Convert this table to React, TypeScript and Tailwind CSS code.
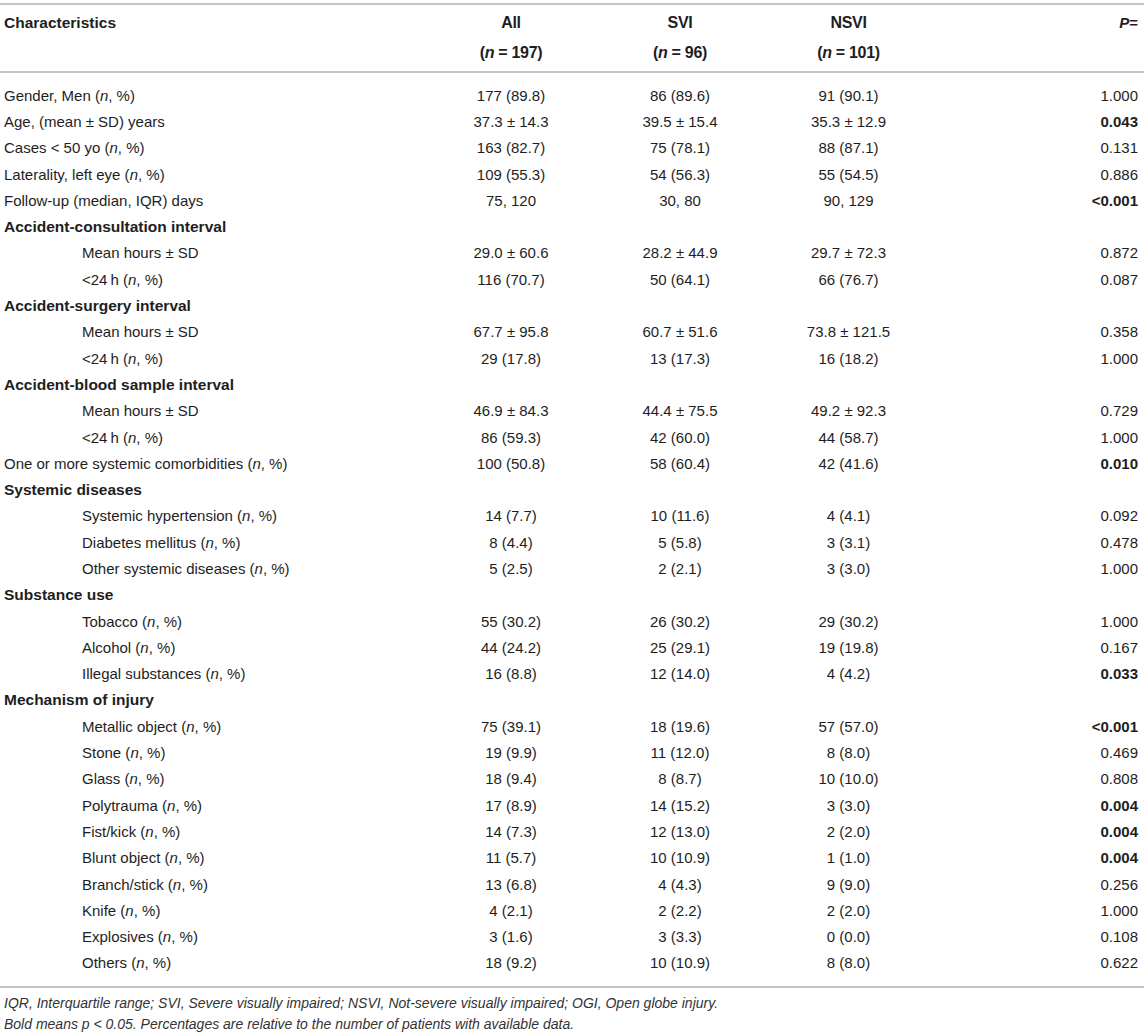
import React from 'react'

type Row = {
  label: React.ReactNode
  kind?: 'head' | 'sub'
  all?: string
  svi?: string
  nsvi?: string
  p?: string
  bold?: boolean
}

const N = () => <i>n</i>

const rows: Row[] = [
  { label: <>Gender, Men (<N />, %)</>, all: '177 (89.8)', svi: '86 (89.6)', nsvi: '91 (90.1)', p: '1.000' },
  { label: <>Age, (mean ± SD) years</>, all: '37.3 ± 14.3', svi: '39.5 ± 15.4', nsvi: '35.3 ± 12.9', p: '0.043', bold: true },
  { label: <>Cases &lt; 50 yo (<N />, %)</>, all: '163 (82.7)', svi: '75 (78.1)', nsvi: '88 (87.1)', p: '0.131' },
  { label: <>Laterality, left eye (<N />, %)</>, all: '109 (55.3)', svi: '54 (56.3)', nsvi: '55 (54.5)', p: '0.886' },
  { label: <>Follow-up (median, IQR) days</>, all: '75, 120', svi: '30, 80', nsvi: '90, 129', p: '<0.001', bold: true },
  { label: 'Accident-consultation interval', kind: 'head' },
  { label: <>Mean hours ± SD</>, kind: 'sub', all: '29.0 ± 60.6', svi: '28.2 ± 44.9', nsvi: '29.7 ± 72.3', p: '0.872' },
  { label: <>&lt;24{'\u2009'}h (<N />, %)</>, kind: 'sub', all: '116 (70.7)', svi: '50 (64.1)', nsvi: '66 (76.7)', p: '0.087' },
  { label: 'Accident-surgery interval', kind: 'head' },
  { label: <>Mean hours ± SD</>, kind: 'sub', all: '67.7 ± 95.8', svi: '60.7 ± 51.6', nsvi: '73.8 ± 121.5', p: '0.358' },
  { label: <>&lt;24{'\u2009'}h (<N />, %)</>, kind: 'sub', all: '29 (17.8)', svi: '13 (17.3)', nsvi: '16 (18.2)', p: '1.000' },
  { label: 'Accident-blood sample interval', kind: 'head' },
  { label: <>Mean hours ± SD</>, kind: 'sub', all: '46.9 ± 84.3', svi: '44.4 ± 75.5', nsvi: '49.2 ± 92.3', p: '0.729' },
  { label: <>&lt;24{'\u2009'}h (<N />, %)</>, kind: 'sub', all: '86 (59.3)', svi: '42 (60.0)', nsvi: '44 (58.7)', p: '1.000' },
  { label: <>One or more systemic comorbidities (<N />, %)</>, all: '100 (50.8)', svi: '58 (60.4)', nsvi: '42 (41.6)', p: '0.010', bold: true },
  { label: 'Systemic diseases', kind: 'head' },
  { label: <>Systemic hypertension (<N />, %)</>, kind: 'sub', all: '14 (7.7)', svi: '10 (11.6)', nsvi: '4 (4.1)', p: '0.092' },
  { label: <>Diabetes mellitus (<N />, %)</>, kind: 'sub', all: '8 (4.4)', svi: '5 (5.8)', nsvi: '3 (3.1)', p: '0.478' },
  { label: <>Other systemic diseases (<N />, %)</>, kind: 'sub', all: '5 (2.5)', svi: '2 (2.1)', nsvi: '3 (3.0)', p: '1.000' },
  { label: 'Substance use', kind: 'head' },
  { label: <>Tobacco (<N />, %)</>, kind: 'sub', all: '55 (30.2)', svi: '26 (30.2)', nsvi: '29 (30.2)', p: '1.000' },
  { label: <>Alcohol (<N />, %)</>, kind: 'sub', all: '44 (24.2)', svi: '25 (29.1)', nsvi: '19 (19.8)', p: '0.167' },
  { label: <>Illegal substances (<N />, %)</>, kind: 'sub', all: '16 (8.8)', svi: '12 (14.0)', nsvi: '4 (4.2)', p: '0.033', bold: true },
  { label: 'Mechanism of injury', kind: 'head' },
  { label: <>Metallic object (<N />, %)</>, kind: 'sub', all: '75 (39.1)', svi: '18 (19.6)', nsvi: '57 (57.0)', p: '<0.001', bold: true },
  { label: <>Stone (<N />, %)</>, kind: 'sub', all: '19 (9.9)', svi: '11 (12.0)', nsvi: '8 (8.0)', p: '0.469' },
  { label: <>Glass (<N />, %)</>, kind: 'sub', all: '18 (9.4)', svi: '8 (8.7)', nsvi: '10 (10.0)', p: '0.808' },
  { label: <>Polytrauma (<N />, %)</>, kind: 'sub', all: '17 (8.9)', svi: '14 (15.2)', nsvi: '3 (3.0)', p: '0.004', bold: true },
  { label: <>Fist/kick (<N />, %)</>, kind: 'sub', all: '14 (7.3)', svi: '12 (13.0)', nsvi: '2 (2.0)', p: '0.004', bold: true },
  { label: <>Blunt object (<N />, %)</>, kind: 'sub', all: '11 (5.7)', svi: '10 (10.9)', nsvi: '1 (1.0)', p: '0.004', bold: true },
  { label: <>Branch/stick (<N />, %)</>, kind: 'sub', all: '13 (6.8)', svi: '4 (4.3)', nsvi: '9 (9.0)', p: '0.256' },
  { label: <>Knife (<N />, %)</>, kind: 'sub', all: '4 (2.1)', svi: '2 (2.2)', nsvi: '2 (2.0)', p: '1.000' },
  { label: <>Explosives (<N />, %)</>, kind: 'sub', all: '3 (1.6)', svi: '3 (3.3)', nsvi: '0 (0.0)', p: '0.108' },
  { label: <>Others (<N />, %)</>, kind: 'sub', all: '18 (9.2)', svi: '10 (10.9)', nsvi: '8 (8.0)', p: '0.622' },
]

const cols = 'grid grid-cols-[427px_168px_170px_167px_1fr]'

export default function App() {
  return (
    <div className="min-h-screen bg-white text-[#1e1e1e] text-[15px] leading-none font-['Liberation_Sans',Arial,sans-serif]">
      <div className="w-[1144px] pt-[3px]">
        {/* top rule */}
        <div className="h-[2px] bg-[#c4c4c4]" />

        {/* Header */}
        <div className={`${cols} h-[66px] font-bold`}>
          <div className="pl-[4px] pt-[10px] text-[15.5px]">Characteristics</div>
          {[
            ['All', '197'],
            ['SVI', '96'],
            ['NSVI', '101'],
          ].map(([name, n]) => (
            <div key={name} className="flex flex-col items-center pt-[10px] gap-[14px] text-[16px] tracking-[-0.3px]">
              <span>{name}</span>
              <span>
                (<i>n</i> = {n})
              </span>
            </div>
          ))}
          <div className="pt-[10px] pr-[6px] text-right">
            <i>P</i>=
          </div>
        </div>
        <div className="h-[2px] bg-[#c4c4c4]" />

        {/* Body */}
        <div className="pt-[9px] pb-[10px]">
          {rows.map((r, i) => (
            <div key={i} className={`${cols} h-[26.3px] items-center`}>
              <div
                className={
                  r.kind === 'head'
                    ? 'pl-[4px] font-bold text-[15.5px] whitespace-nowrap'
                    : r.kind === 'sub'
                    ? 'pl-[82px] whitespace-nowrap'
                    : 'pl-[4px] whitespace-nowrap'
                }
              >
                {r.label}
              </div>
              <div className="text-center">{r.all}</div>
              <div className="text-center">{r.svi}</div>
              <div className="text-center">{r.nsvi}</div>
              <div className={`text-right pr-[6px] ${r.bold ? 'font-bold' : ''}`}>{r.p}</div>
            </div>
          ))}
        </div>
        <div className="h-[2px] bg-[#c4c4c4]" />

        {/* Footnotes */}
        <div className="pl-[4px] pt-[8px] italic text-[14px] text-[#333] flex flex-col gap-[7px]">
          <p>IQR, Interquartile range; SVI, Severe visually impaired; NSVI, Not-severe visually impaired; OGI, Open globe injury.</p>
          <p>Bold means p &lt; 0.05. Percentages are relative to the number of patients with available data.</p>
        </div>
      </div>
    </div>
  )
}
